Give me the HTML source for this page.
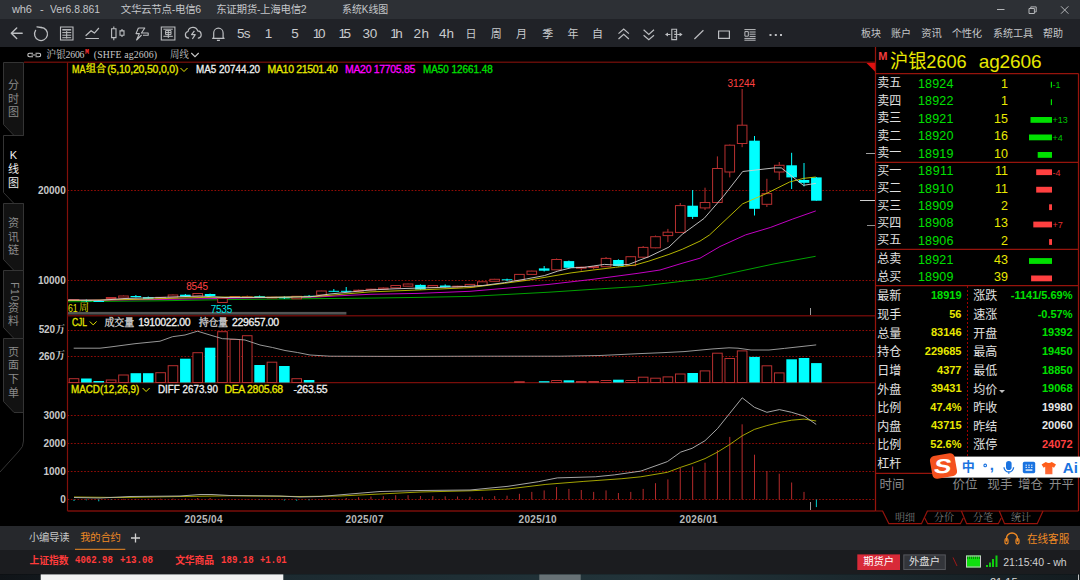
<!DOCTYPE html>
<html lang="zh-CN"><head><meta charset="utf-8"><title>wh6</title>
<style>
html,body{margin:0;padding:0;background:#000;}
body{width:1080px;height:580px;position:relative;overflow:hidden;font-family:'Liberation Sans','Noto Sans CJK SC',sans-serif;}
svg{position:absolute;left:0;top:0;}
.t{position:absolute;white-space:pre;display:block;}
</style></head><body>
<svg width="1080" height="580" viewBox="0 0 1080 580" shape-rendering="auto">
<rect x="0.00" y="0.00" width="1080.00" height="19.00" fill="#2d3035" />
<rect x="0.00" y="19.00" width="1080.00" height="28.00" fill="#202227" />
<line x1="997.00" y1="9.50" x2="1004.50" y2="9.50" stroke="#b4b6b9" stroke-width="1" />
<path d="M1029 8.5h5.4v5h-5.4z M1030.8 8.5v-1.6h5.4v5h-1.8" stroke="#b4b6b9" stroke-width="1" fill="none" />
<path d="M1061 6.3l7.4 7.4M1068.4 6.3l-7.4 7.4" stroke="#b4b6b9" stroke-width="1" fill="none" />
<path d="M22.2 33.2H11.3M16.7 28l-5.4 5.2 5.4 5.2" stroke="#bcbec1" stroke-width="1.4" fill="none" stroke-linecap="round" stroke-linejoin="round"/>
<path d="M41.2 27.5A6.5 6.5 0 1 1 35.6 30.4" stroke="#bcbec1" stroke-width="1.3" fill="none" stroke-linecap="round"/>
<path d="M37 26.9l4.2 0.6" stroke="#bcbec1" stroke-width="1.3" fill="none" stroke-linecap="round"/>
<path d="M60.5 27h12.5v13h-12.5z" stroke="#bcbec1" stroke-width="1.1" fill="none" />
<path d="M62.3 29.8h8.9" stroke="#bcbec1" stroke-width="1.5" fill="none" />
<path d="M62.3 32.6h8.9M62.3 35.2h8.9M62.3 37.7h8.9M66.7 31v7.5" stroke="#bcbec1" stroke-width="1" fill="none" />
<path d="M85.6 35.8l5.5-5.1 3.3 2.4 4.5-5.1M85.6 38.5h13.3" stroke="#bcbec1" stroke-width="1.2" fill="none" stroke-linejoin="round"/>
<path d="M113.8 26.4v13.8M122 29.1v7.8" stroke="#bcbec1" stroke-width="1.1" fill="none" />
<path d="M111.6 28.7h4.4v8.9h-4.4zM120 30.9h4v4.4h-4z" stroke="#bcbec1" stroke-width="1.1" fill="#202227" />
<path d="M138.4 28h6.4l-3.4 5h6.8v2.2h-5.2M138.4 28l-2.4 5.6h3.4l-2.8 6.4 5-5" stroke="#bcbec1" stroke-width="1.1" fill="none" stroke-linejoin="round"/>
<path d="M161.3 27h13.6v13h-13.6z" stroke="#bcbec1" stroke-width="1.1" fill="none" />
<path d="M163.4 29.2h9.4M165.6 30.6h5.4v4h-5.4zM165.6 32.6h5.4M168.3 30.6v7.4M163.4 36.3h9.4" stroke="#bcbec1" stroke-width="1" fill="none" />
<path d="M188.6 38.2a3.4 3.4 0 0 1-0.6-6.7 5 5 0 0 1 9.7-0.6 3.7 3.7 0 0 1 0.6 7.3" stroke="#bcbec1" stroke-width="1.2" fill="none" stroke-linecap="round"/>
<path d="M194.4 30.8l-2.8 3.8h3.6l-2.8 4.4" stroke="#bcbec1" stroke-width="1.2" fill="none" stroke-linejoin="round"/>
<path d="M213.7 37.3v-4.4a4.7 4.7 0 0 1 9.4 0v4.4l1 1.1h-11.4zM216.9 40.4h3" stroke="#bcbec1" stroke-width="1.2" fill="none" stroke-linejoin="round"/>
<path d="M618.5 33.6l5.2-4.6 5.2 4.6M618.5 39l5.2-4.6 5.2 4.6" stroke="#bcbec1" stroke-width="1.2" fill="none" />
<path d="M643.6 29.8l5.2 4.6 5.2-4.6M643.6 35.2l5.2 4.6 5.2-4.6" stroke="#bcbec1" stroke-width="1.2" fill="none" />
<path d="M671.8 29.2h4.8v10.4h-4.8zM674.2 31.8h2.4M674.2 34.4h2.4M674.2 37h2.4" stroke="#bcbec1" stroke-width="1.1" fill="none" />
<path d="M667 34.5h3.4M677.2 34.5h3" stroke="#bcbec1" stroke-width="1.1" fill="none" />
<path d="M665 34.5l3-1.9v3.8zM682.6 34.5l-3-1.9v3.8z" stroke="#bcbec1" stroke-width="0" fill="#bcbec1" />
<line x1="694.40" y1="39.00" x2="703.40" y2="30.20" stroke="#bcbec1" stroke-width="1.2" />
<path d="M718.6 31h10.8v7.3h-10.8z" stroke="#bcbec1" stroke-width="1.2" fill="none" />
<path d="M744.4 29.6h11.2M749.6 32h6M749.6 34.2h6M749.6 36.4h6M744.4 38.4h11.2M744.4 40.2h11.2" stroke="#bcbec1" stroke-width="1" fill="none" />
<path d="M744.9 31.6h3.4v4.6h-3.4z" stroke="#bcbec1" stroke-width="1" fill="none" />
<rect x="769.50" y="34.00" width="2.00" height="2.00" fill="#bcbec1" />
<rect x="774.80" y="34.00" width="2.00" height="2.00" fill="#bcbec1" />
<rect x="780.00" y="34.00" width="2.00" height="2.00" fill="#bcbec1" />
<path d="M33 53.3h-3.5a1.7 1.7 0 0 0 0 3.4h3.5M35.5 53.3h3.5a1.7 1.7 0 0 1 0 3.4h-3.5M31.5 55h5.5" stroke="#c8c8c8" stroke-width="1.1" fill="none" />
<path d="M191.3 53l3.7 3.7 3.7-3.7" stroke="#c8c8c8" stroke-width="1.1" fill="none" />
<path d="M3.5 62.5 H23.5 V135.5 H14 L3.5 124.5 Z" stroke="#343434" stroke-width="1" fill="#121212" />
<path d="M3.5 203.5 H23.5 V270.5 H14 L3.5 259.5 Z" stroke="#343434" stroke-width="1" fill="#121212" />
<path d="M3.5 270.5 H23.5 V338.5 H14 L3.5 327.5 Z" stroke="#343434" stroke-width="1" fill="#121212" />
<path d="M3.5 338.5 H23.5 V412.5 H14 L3.5 401.5 Z" stroke="#343434" stroke-width="1" fill="#121212" />
<path d="M23.5 135.5H3.5V192.5L14 203.5H23.5" stroke="#343434" stroke-width="1" fill="none" />
<path d="M23.5 412V441Q23.5 447 19 451L0 472" stroke="#343434" stroke-width="1" fill="none" />
<line x1="24.00" y1="62.20" x2="875.50" y2="62.20" stroke="#620c08" stroke-width="1.4" />
<line x1="67.50" y1="62.50" x2="67.50" y2="511.00" stroke="#82100a" stroke-width="1.2" />
<line x1="67.50" y1="315.70" x2="875.50" y2="315.70" stroke="#660a08" stroke-width="1.5" />
<line x1="67.50" y1="382.60" x2="875.50" y2="382.60" stroke="#780e0a" stroke-width="1.3" />
<line x1="67.50" y1="511.00" x2="875.50" y2="511.00" stroke="#780e0a" stroke-width="1.3" />
<path d="M866.5 63 H875.5 V72 Z" stroke="#e01010" stroke-width="0" fill="#e01010" />
<line x1="67.50" y1="190.50" x2="875.50" y2="190.50" stroke="#900c06" stroke-width="1" stroke-dasharray="1.67 1.67"/>
<line x1="67.50" y1="280.50" x2="875.50" y2="280.50" stroke="#900c06" stroke-width="1" stroke-dasharray="1.67 1.67"/>
<polyline points="68.0,301.8 160.0,300.8 227.0,299.6 270.0,299.1 370.0,298.1 418.0,297.4 470.0,296.4 504.0,294.6 549.0,292.2 593.0,289.3 638.0,286.5 682.0,281.3 706.0,278.7 738.0,271.6 774.0,263.9 815.6,256.3" stroke="#00b400" stroke-width="0.9" fill="none" stroke-linejoin="round" />
<polyline points="68.0,300.4 160.0,299.5 227.0,298.3 270.0,297.5 316.0,297.0 345.0,295.5 370.0,294.3 418.0,293.4 470.0,291.3 504.0,288.4 549.0,284.4 593.0,279.3 638.0,273.3 660.0,270.0 682.0,263.3 700.0,258.2 720.0,246.5 745.5,234.9 770.3,227.5 792.3,219.2 815.8,210.9" stroke="#d800d8" stroke-width="0.9" fill="none" stroke-linejoin="round" />
<line x1="74.00" y1="299.00" x2="74.00" y2="299.50" stroke="#b83030" stroke-width="1" />
<line x1="74.00" y1="300.50" x2="74.00" y2="301.00" stroke="#b83030" stroke-width="1" />
<rect x="69.20" y="299.50" width="9.60" height="1.00" fill="#000" stroke="#b83030" stroke-width="1"/>
<line x1="86.37" y1="299.50" x2="86.37" y2="302.00" stroke="#00ffff" stroke-width="1" />
<rect x="81.07" y="300.30" width="10.60" height="1.00" fill="#00ffff" />
<line x1="98.75" y1="300.50" x2="98.75" y2="302.00" stroke="#00ffff" stroke-width="1" />
<rect x="93.45" y="301.00" width="10.60" height="1.00" fill="#00ffff" />
<line x1="111.12" y1="297.00" x2="111.12" y2="297.50" stroke="#b83030" stroke-width="1" />
<line x1="111.12" y1="298.50" x2="111.12" y2="299.00" stroke="#b83030" stroke-width="1" />
<rect x="106.32" y="297.50" width="9.60" height="1.00" fill="#000" stroke="#b83030" stroke-width="1"/>
<line x1="123.49" y1="295.50" x2="123.49" y2="296.00" stroke="#b83030" stroke-width="1" />
<line x1="123.49" y1="298.00" x2="123.49" y2="298.50" stroke="#b83030" stroke-width="1" />
<rect x="118.69" y="296.00" width="9.60" height="2.00" fill="#000" stroke="#b83030" stroke-width="1"/>
<line x1="135.87" y1="295.00" x2="135.87" y2="297.50" stroke="#00ffff" stroke-width="1" />
<rect x="130.56" y="296.00" width="10.60" height="1.20" fill="#00ffff" />
<line x1="148.24" y1="296.50" x2="148.24" y2="299.00" stroke="#00ffff" stroke-width="1" />
<rect x="142.94" y="297.20" width="10.60" height="1.60" fill="#00ffff" />
<line x1="160.61" y1="297.00" x2="160.61" y2="297.30" stroke="#b83030" stroke-width="1" />
<line x1="160.61" y1="298.00" x2="160.61" y2="298.50" stroke="#b83030" stroke-width="1" />
<rect x="155.81" y="297.30" width="9.60" height="0.80" fill="#000" stroke="#b83030" stroke-width="1"/>
<line x1="172.98" y1="294.50" x2="172.98" y2="295.00" stroke="#b83030" stroke-width="1" />
<line x1="172.98" y1="297.20" x2="172.98" y2="297.50" stroke="#b83030" stroke-width="1" />
<rect x="168.18" y="295.00" width="9.60" height="2.20" fill="#000" stroke="#b83030" stroke-width="1"/>
<line x1="185.36" y1="294.00" x2="185.36" y2="297.00" stroke="#00ffff" stroke-width="1" />
<rect x="180.06" y="294.70" width="10.60" height="2.00" fill="#00ffff" />
<line x1="197.73" y1="293.40" x2="197.73" y2="293.50" stroke="#b83030" stroke-width="1" />
<line x1="197.73" y1="296.20" x2="197.73" y2="296.50" stroke="#b83030" stroke-width="1" />
<rect x="192.93" y="293.50" width="9.60" height="2.70" fill="#000" stroke="#b83030" stroke-width="1"/>
<line x1="210.10" y1="293.60" x2="210.10" y2="296.30" stroke="#00ffff" stroke-width="1" />
<rect x="204.80" y="294.00" width="10.60" height="2.00" fill="#00ffff" />
<line x1="222.48" y1="297.50" x2="222.48" y2="298.30" stroke="#b83030" stroke-width="1" />
<line x1="222.48" y1="302.50" x2="222.48" y2="302.70" stroke="#b83030" stroke-width="1" />
<rect x="217.68" y="298.30" width="9.60" height="4.20" fill="#000" stroke="#b83030" stroke-width="1"/>
<line x1="234.85" y1="296.00" x2="234.85" y2="296.50" stroke="#b83030" stroke-width="1" />
<line x1="234.85" y1="297.00" x2="234.85" y2="297.50" stroke="#b83030" stroke-width="1" />
<rect x="230.05" y="296.50" width="9.60" height="0.80" fill="#000" stroke="#b83030" stroke-width="1"/>
<line x1="247.22" y1="295.50" x2="247.22" y2="296.80" stroke="#b83030" stroke-width="1" />
<line x1="247.22" y1="297.40" x2="247.22" y2="298.00" stroke="#b83030" stroke-width="1" />
<rect x="242.42" y="296.80" width="9.60" height="0.80" fill="#000" stroke="#b83030" stroke-width="1"/>
<line x1="259.60" y1="295.50" x2="259.60" y2="297.20" stroke="#00ffff" stroke-width="1" />
<rect x="254.30" y="296.20" width="10.60" height="1.00" fill="#00ffff" />
<line x1="271.97" y1="296.80" x2="271.97" y2="297.20" stroke="#b83030" stroke-width="1" />
<line x1="271.97" y1="298.00" x2="271.97" y2="298.20" stroke="#b83030" stroke-width="1" />
<rect x="267.17" y="297.20" width="9.60" height="0.80" fill="#000" stroke="#b83030" stroke-width="1"/>
<line x1="284.34" y1="296.30" x2="284.34" y2="299.00" stroke="#00ffff" stroke-width="1" />
<rect x="279.04" y="297.30" width="10.60" height="1.00" fill="#00ffff" />
<line x1="296.71" y1="296.00" x2="296.71" y2="296.30" stroke="#b83030" stroke-width="1" />
<line x1="296.71" y1="298.80" x2="296.71" y2="299.00" stroke="#b83030" stroke-width="1" />
<rect x="291.91" y="296.30" width="9.60" height="2.50" fill="#000" stroke="#b83030" stroke-width="1"/>
<line x1="309.09" y1="295.00" x2="309.09" y2="296.80" stroke="#00ffff" stroke-width="1" />
<rect x="303.79" y="295.80" width="10.60" height="1.00" fill="#00ffff" />
<line x1="321.46" y1="290.80" x2="321.46" y2="291.00" stroke="#b83030" stroke-width="1" />
<line x1="321.46" y1="295.00" x2="321.46" y2="295.30" stroke="#b83030" stroke-width="1" />
<rect x="316.66" y="291.00" width="9.60" height="4.00" fill="#000" stroke="#b83030" stroke-width="1"/>
<line x1="333.83" y1="289.00" x2="333.83" y2="292.00" stroke="#00ffff" stroke-width="1" />
<rect x="328.53" y="290.80" width="10.60" height="1.00" fill="#00ffff" />
<line x1="346.21" y1="287.00" x2="346.21" y2="292.00" stroke="#00ffff" stroke-width="1" />
<rect x="340.91" y="290.80" width="10.60" height="1.00" fill="#00ffff" />
<line x1="358.58" y1="289.60" x2="358.58" y2="290.20" stroke="#b83030" stroke-width="1" />
<line x1="358.58" y1="291.00" x2="358.58" y2="291.30" stroke="#b83030" stroke-width="1" />
<rect x="353.78" y="290.20" width="9.60" height="0.80" fill="#000" stroke="#b83030" stroke-width="1"/>
<line x1="370.95" y1="288.80" x2="370.95" y2="289.20" stroke="#b83030" stroke-width="1" />
<line x1="370.95" y1="290.00" x2="370.95" y2="290.50" stroke="#b83030" stroke-width="1" />
<rect x="366.15" y="289.20" width="9.60" height="0.80" fill="#000" stroke="#b83030" stroke-width="1"/>
<line x1="383.32" y1="287.50" x2="383.32" y2="288.00" stroke="#b83030" stroke-width="1" />
<line x1="383.32" y1="289.20" x2="383.32" y2="289.50" stroke="#b83030" stroke-width="1" />
<rect x="378.52" y="288.00" width="9.60" height="1.20" fill="#000" stroke="#b83030" stroke-width="1"/>
<line x1="395.70" y1="285.20" x2="395.70" y2="285.50" stroke="#b83030" stroke-width="1" />
<line x1="395.70" y1="287.80" x2="395.70" y2="288.00" stroke="#b83030" stroke-width="1" />
<rect x="390.90" y="285.50" width="9.60" height="2.30" fill="#000" stroke="#b83030" stroke-width="1"/>
<line x1="408.07" y1="283.60" x2="408.07" y2="284.00" stroke="#b83030" stroke-width="1" />
<line x1="408.07" y1="286.20" x2="408.07" y2="286.60" stroke="#b83030" stroke-width="1" />
<rect x="403.27" y="284.00" width="9.60" height="2.20" fill="#000" stroke="#b83030" stroke-width="1"/>
<line x1="420.44" y1="284.40" x2="420.44" y2="289.80" stroke="#00ffff" stroke-width="1" />
<rect x="415.14" y="284.90" width="10.60" height="4.60" fill="#00ffff" />
<line x1="432.82" y1="285.00" x2="432.82" y2="285.50" stroke="#b83030" stroke-width="1" />
<line x1="432.82" y1="287.30" x2="432.82" y2="287.60" stroke="#b83030" stroke-width="1" />
<rect x="428.02" y="285.50" width="9.60" height="1.80" fill="#000" stroke="#b83030" stroke-width="1"/>
<line x1="445.19" y1="284.40" x2="445.19" y2="287.40" stroke="#00ffff" stroke-width="1" />
<rect x="439.89" y="285.50" width="10.60" height="1.50" fill="#00ffff" />
<line x1="457.56" y1="285.80" x2="457.56" y2="286.20" stroke="#b83030" stroke-width="1" />
<line x1="457.56" y1="287.00" x2="457.56" y2="287.40" stroke="#b83030" stroke-width="1" />
<rect x="452.76" y="286.20" width="9.60" height="0.80" fill="#000" stroke="#b83030" stroke-width="1"/>
<line x1="469.94" y1="284.00" x2="469.94" y2="284.40" stroke="#b83030" stroke-width="1" />
<line x1="469.94" y1="286.70" x2="469.94" y2="287.00" stroke="#b83030" stroke-width="1" />
<rect x="465.14" y="284.40" width="9.60" height="2.30" fill="#000" stroke="#b83030" stroke-width="1"/>
<line x1="482.31" y1="281.40" x2="482.31" y2="281.80" stroke="#b83030" stroke-width="1" />
<line x1="482.31" y1="285.50" x2="482.31" y2="285.80" stroke="#b83030" stroke-width="1" />
<rect x="477.51" y="281.80" width="9.60" height="3.70" fill="#000" stroke="#b83030" stroke-width="1"/>
<line x1="494.68" y1="278.80" x2="494.68" y2="279.30" stroke="#b83030" stroke-width="1" />
<line x1="494.68" y1="281.30" x2="494.68" y2="281.60" stroke="#b83030" stroke-width="1" />
<rect x="489.88" y="279.30" width="9.60" height="2.00" fill="#000" stroke="#b83030" stroke-width="1"/>
<line x1="507.05" y1="278.60" x2="507.05" y2="281.00" stroke="#00ffff" stroke-width="1" />
<rect x="501.75" y="279.30" width="10.60" height="1.00" fill="#00ffff" />
<line x1="519.43" y1="274.00" x2="519.43" y2="274.40" stroke="#b83030" stroke-width="1" />
<line x1="519.43" y1="280.40" x2="519.43" y2="280.80" stroke="#b83030" stroke-width="1" />
<rect x="514.63" y="274.40" width="9.60" height="6.00" fill="#000" stroke="#b83030" stroke-width="1"/>
<line x1="531.80" y1="270.70" x2="531.80" y2="271.10" stroke="#b83030" stroke-width="1" />
<line x1="531.80" y1="274.40" x2="531.80" y2="274.80" stroke="#b83030" stroke-width="1" />
<rect x="527.00" y="271.10" width="9.60" height="3.30" fill="#000" stroke="#b83030" stroke-width="1"/>
<line x1="544.17" y1="266.00" x2="544.17" y2="271.50" stroke="#00ffff" stroke-width="1" />
<rect x="538.87" y="268.40" width="10.60" height="2.30" fill="#00ffff" />
<line x1="556.55" y1="258.50" x2="556.55" y2="259.50" stroke="#b83030" stroke-width="1" />
<line x1="556.55" y1="269.80" x2="556.55" y2="270.20" stroke="#b83030" stroke-width="1" />
<rect x="551.75" y="259.50" width="9.60" height="10.30" fill="#000" stroke="#b83030" stroke-width="1"/>
<line x1="568.92" y1="260.50" x2="568.92" y2="268.20" stroke="#00ffff" stroke-width="1" />
<rect x="563.62" y="261.10" width="10.60" height="6.70" fill="#00ffff" />
<line x1="581.29" y1="266.80" x2="581.29" y2="267.20" stroke="#b83030" stroke-width="1" />
<line x1="581.29" y1="268.20" x2="581.29" y2="270.60" stroke="#b83030" stroke-width="1" />
<rect x="576.49" y="267.20" width="9.60" height="1.00" fill="#000" stroke="#b83030" stroke-width="1"/>
<line x1="593.67" y1="266.00" x2="593.67" y2="266.60" stroke="#b83030" stroke-width="1" />
<line x1="593.67" y1="267.60" x2="593.67" y2="269.30" stroke="#b83030" stroke-width="1" />
<rect x="588.87" y="266.60" width="9.60" height="1.00" fill="#000" stroke="#b83030" stroke-width="1"/>
<line x1="606.04" y1="257.00" x2="606.04" y2="258.40" stroke="#b83030" stroke-width="1" />
<line x1="606.04" y1="266.70" x2="606.04" y2="267.00" stroke="#b83030" stroke-width="1" />
<rect x="601.24" y="258.40" width="9.60" height="8.30" fill="#000" stroke="#b83030" stroke-width="1"/>
<line x1="618.41" y1="259.30" x2="618.41" y2="266.40" stroke="#00ffff" stroke-width="1" />
<rect x="613.11" y="260.00" width="10.60" height="6.00" fill="#00ffff" />
<line x1="630.78" y1="256.00" x2="630.78" y2="256.70" stroke="#b83030" stroke-width="1" />
<line x1="630.78" y1="265.60" x2="630.78" y2="266.00" stroke="#b83030" stroke-width="1" />
<rect x="625.99" y="256.70" width="9.60" height="8.90" fill="#000" stroke="#b83030" stroke-width="1"/>
<line x1="643.16" y1="246.00" x2="643.16" y2="247.40" stroke="#b83030" stroke-width="1" />
<line x1="643.16" y1="257.20" x2="643.16" y2="258.00" stroke="#b83030" stroke-width="1" />
<rect x="638.36" y="247.40" width="9.60" height="9.80" fill="#000" stroke="#b83030" stroke-width="1"/>
<line x1="655.53" y1="235.50" x2="655.53" y2="236.70" stroke="#b83030" stroke-width="1" />
<line x1="655.53" y1="247.80" x2="655.53" y2="248.30" stroke="#b83030" stroke-width="1" />
<rect x="650.73" y="236.70" width="9.60" height="11.10" fill="#000" stroke="#b83030" stroke-width="1"/>
<line x1="667.90" y1="228.90" x2="667.90" y2="232.20" stroke="#b83030" stroke-width="1" />
<line x1="667.90" y1="235.60" x2="667.90" y2="242.20" stroke="#b83030" stroke-width="1" />
<rect x="663.10" y="232.20" width="9.60" height="3.40" fill="#000" stroke="#b83030" stroke-width="1"/>
<line x1="680.28" y1="203.00" x2="680.28" y2="205.60" stroke="#b83030" stroke-width="1" />
<line x1="680.28" y1="232.40" x2="680.28" y2="233.00" stroke="#b83030" stroke-width="1" />
<rect x="675.48" y="205.60" width="9.60" height="26.80" fill="#000" stroke="#b83030" stroke-width="1"/>
<line x1="692.65" y1="190.00" x2="692.65" y2="219.00" stroke="#00ffff" stroke-width="1" />
<rect x="687.35" y="205.70" width="10.60" height="11.20" fill="#00ffff" />
<line x1="705.02" y1="187.70" x2="705.02" y2="202.50" stroke="#b83030" stroke-width="1" />
<line x1="705.02" y1="207.90" x2="705.02" y2="210.00" stroke="#b83030" stroke-width="1" />
<rect x="700.22" y="202.50" width="9.60" height="5.40" fill="#000" stroke="#b83030" stroke-width="1"/>
<line x1="717.40" y1="156.40" x2="717.40" y2="168.50" stroke="#b83030" stroke-width="1" />
<line x1="717.40" y1="202.50" x2="717.40" y2="203.00" stroke="#b83030" stroke-width="1" />
<rect x="712.60" y="168.50" width="9.60" height="34.00" fill="#000" stroke="#b83030" stroke-width="1"/>
<line x1="729.77" y1="144.50" x2="729.77" y2="145.20" stroke="#b83030" stroke-width="1" />
<line x1="729.77" y1="172.00" x2="729.77" y2="177.40" stroke="#b83030" stroke-width="1" />
<rect x="724.97" y="145.20" width="9.60" height="26.80" fill="#000" stroke="#b83030" stroke-width="1"/>
<line x1="742.14" y1="89.00" x2="742.14" y2="125.20" stroke="#b83030" stroke-width="1" />
<line x1="742.14" y1="143.50" x2="742.14" y2="147.20" stroke="#b83030" stroke-width="1" />
<rect x="737.34" y="125.20" width="9.60" height="18.30" fill="#000" stroke="#b83030" stroke-width="1"/>
<line x1="754.51" y1="136.00" x2="754.51" y2="215.50" stroke="#00ffff" stroke-width="1" />
<rect x="749.22" y="140.70" width="10.60" height="68.10" fill="#00ffff" />
<line x1="766.89" y1="178.80" x2="766.89" y2="193.60" stroke="#b83030" stroke-width="1" />
<line x1="766.89" y1="204.30" x2="766.89" y2="207.00" stroke="#b83030" stroke-width="1" />
<rect x="762.09" y="193.60" width="9.60" height="10.70" fill="#000" stroke="#b83030" stroke-width="1"/>
<line x1="779.26" y1="162.00" x2="779.26" y2="165.30" stroke="#b83030" stroke-width="1" />
<line x1="779.26" y1="172.00" x2="779.26" y2="180.00" stroke="#b83030" stroke-width="1" />
<rect x="774.46" y="165.30" width="9.60" height="6.70" fill="#000" stroke="#b83030" stroke-width="1"/>
<line x1="791.63" y1="152.80" x2="791.63" y2="189.00" stroke="#00ffff" stroke-width="1" />
<rect x="786.33" y="165.30" width="10.60" height="12.10" fill="#00ffff" />
<line x1="804.01" y1="163.00" x2="804.01" y2="186.40" stroke="#00ffff" stroke-width="1" />
<rect x="798.71" y="180.00" width="10.60" height="2.80" fill="#00ffff" />
<line x1="816.38" y1="177.00" x2="816.38" y2="200.70" stroke="#00ffff" stroke-width="1" />
<rect x="811.08" y="177.40" width="10.60" height="23.30" fill="#00ffff" />
<polyline points="68.0,300.6 130.0,299.5 160.0,298.7 200.0,297.5 227.0,297.0 270.0,297.3 316.0,296.5 345.0,294.0 370.0,291.9 418.0,290.0 470.0,287.6 504.4,283.3 526.7,280.4 548.9,276.7 571.1,272.9 593.3,270.0 615.6,267.3 635.6,264.9 648.9,261.1 668.9,254.4 682.2,249.3 700.0,241.1 709.6,234.9 742.7,203.8 766.2,193.6 789.6,182.0 803.4,178.4 815.8,177.0" stroke="#c8c800" stroke-width="0.9" fill="none" stroke-linejoin="round" />
<polyline points="68.0,300.0 100.0,300.3 125.0,298.5 160.0,297.5 200.0,296.0 225.0,297.5 270.0,297.4 310.0,296.8 330.0,294.0 350.0,292.0 370.0,290.0 395.0,288.8 418.0,288.1 445.0,287.3 460.0,286.7 482.2,285.6 504.4,282.7 526.7,278.9 544.4,275.6 557.8,271.1 571.1,267.8 584.4,267.3 593.3,266.0 604.4,264.4 615.6,265.1 628.9,264.4 640.0,260.0 648.9,256.7 668.9,247.1 682.2,234.4 704.1,218.4 723.4,196.3 742.7,171.5 774.4,167.9 781.3,167.9 803.4,185.3 815.8,183.4" stroke="#d0d0d0" stroke-width="0.9" fill="none" stroke-linejoin="round" />
<rect x="68.00" y="311.90" width="278.40" height="2.70" fill="#525454" />
<line x1="810.50" y1="308.00" x2="810.50" y2="315.00" stroke="#9a9a9a" stroke-width="1" />
<path d="M180.5 68l3.5 3.5 3.5-3.5" stroke="#e8e800" stroke-width="1" fill="none" />
<line x1="67.50" y1="330.50" x2="875.50" y2="330.50" stroke="#900c06" stroke-width="1" stroke-dasharray="1.67 1.67"/>
<line x1="67.50" y1="356.50" x2="875.50" y2="356.50" stroke="#900c06" stroke-width="1" stroke-dasharray="1.67 1.67"/>
<path d="M89.8 321.5l3.4 3.4 3.4-3.4" stroke="#e8e800" stroke-width="1" fill="none" />
<rect x="69.20" y="378.70" width="9.60" height="3.80" fill="#000" stroke="#b83030" stroke-width="1"/>
<rect x="81.07" y="378.50" width="10.60" height="4.00" fill="#00ffff" />
<rect x="93.45" y="381.00" width="10.60" height="1.50" fill="#00ffff" />
<rect x="106.32" y="380.00" width="9.60" height="2.50" fill="#000" stroke="#b83030" stroke-width="1"/>
<rect x="118.69" y="375.00" width="9.60" height="7.50" fill="#000" stroke="#b83030" stroke-width="1"/>
<rect x="130.56" y="373.20" width="10.60" height="9.30" fill="#00ffff" />
<rect x="142.94" y="373.20" width="10.60" height="9.30" fill="#00ffff" />
<rect x="155.81" y="372.70" width="9.60" height="9.80" fill="#000" stroke="#b83030" stroke-width="1"/>
<rect x="168.18" y="365.70" width="9.60" height="16.80" fill="#000" stroke="#b83030" stroke-width="1"/>
<rect x="180.06" y="358.70" width="10.60" height="23.80" fill="#00ffff" />
<rect x="192.93" y="352.70" width="9.60" height="29.80" fill="#000" stroke="#b83030" stroke-width="1"/>
<rect x="204.80" y="347.70" width="10.60" height="34.80" fill="#00ffff" />
<rect x="217.68" y="331.70" width="9.60" height="50.80" fill="#000" stroke="#b83030" stroke-width="1"/>
<rect x="230.05" y="339.50" width="9.60" height="43.00" fill="#000" stroke="#b83030" stroke-width="1"/>
<rect x="242.42" y="335.70" width="9.60" height="46.80" fill="#000" stroke="#b83030" stroke-width="1"/>
<rect x="254.30" y="365.00" width="10.60" height="17.50" fill="#00ffff" />
<rect x="267.17" y="362.20" width="9.60" height="20.30" fill="#000" stroke="#b83030" stroke-width="1"/>
<rect x="279.04" y="366.00" width="10.60" height="16.50" fill="#00ffff" />
<rect x="291.91" y="378.70" width="9.60" height="3.80" fill="#000" stroke="#b83030" stroke-width="1"/>
<rect x="303.79" y="380.00" width="10.60" height="2.50" fill="#00ffff" />
<rect x="514.63" y="381.70" width="9.60" height="0.80" fill="#000" stroke="#b83030" stroke-width="1"/>
<rect x="538.87" y="381.20" width="10.60" height="1.30" fill="#00ffff" />
<rect x="551.75" y="380.50" width="9.60" height="2.00" fill="#000" stroke="#b83030" stroke-width="1"/>
<rect x="563.62" y="380.30" width="10.60" height="2.20" fill="#00ffff" />
<rect x="576.49" y="381.50" width="9.60" height="1.00" fill="#000" stroke="#b83030" stroke-width="1"/>
<rect x="588.87" y="381.50" width="9.60" height="1.00" fill="#000" stroke="#b83030" stroke-width="1"/>
<rect x="601.24" y="380.50" width="9.60" height="2.00" fill="#000" stroke="#b83030" stroke-width="1"/>
<rect x="613.11" y="379.70" width="10.60" height="2.80" fill="#00ffff" />
<rect x="625.99" y="380.50" width="9.60" height="2.00" fill="#000" stroke="#b83030" stroke-width="1"/>
<rect x="638.36" y="377.20" width="9.60" height="5.30" fill="#000" stroke="#b83030" stroke-width="1"/>
<rect x="650.73" y="378.20" width="9.60" height="4.30" fill="#000" stroke="#b83030" stroke-width="1"/>
<rect x="663.10" y="376.90" width="9.60" height="5.60" fill="#000" stroke="#b83030" stroke-width="1"/>
<rect x="675.48" y="374.00" width="9.60" height="8.50" fill="#000" stroke="#b83030" stroke-width="1"/>
<rect x="687.35" y="373.00" width="10.60" height="9.50" fill="#00ffff" />
<rect x="700.22" y="370.90" width="9.60" height="11.60" fill="#000" stroke="#b83030" stroke-width="1"/>
<rect x="712.60" y="353.20" width="9.60" height="29.30" fill="#000" stroke="#b83030" stroke-width="1"/>
<rect x="724.97" y="358.50" width="9.60" height="24.00" fill="#000" stroke="#b83030" stroke-width="1"/>
<rect x="737.34" y="350.90" width="9.60" height="31.60" fill="#000" stroke="#b83030" stroke-width="1"/>
<rect x="749.22" y="356.90" width="10.60" height="25.60" fill="#00ffff" />
<rect x="762.09" y="365.80" width="9.60" height="16.70" fill="#000" stroke="#b83030" stroke-width="1"/>
<rect x="774.46" y="372.90" width="9.60" height="9.60" fill="#000" stroke="#b83030" stroke-width="1"/>
<rect x="786.33" y="359.30" width="10.60" height="23.20" fill="#00ffff" />
<rect x="798.71" y="358.00" width="10.60" height="24.50" fill="#00ffff" />
<rect x="811.08" y="363.10" width="10.60" height="19.40" fill="#00ffff" />
<polyline points="73.7,348.2 100.0,348.2 110.0,347.0 135.0,343.7 160.0,341.2 172.5,336.7 185.0,335.0 197.5,331.2 210.0,335.0 222.5,338.7 235.0,339.2 245.0,340.0 260.0,345.0 272.5,347.5 285.0,350.5 297.5,352.5 310.0,355.0 330.0,356.2 400.0,356.4 480.0,356.2 560.0,356.2 600.0,355.5 640.0,353.6 662.0,352.7 684.0,351.6 713.0,348.9 729.0,347.8 738.0,348.2 751.0,350.0 769.0,350.0 784.4,348.4 800.0,346.7 816.2,344.9" stroke="#a8a8a8" stroke-width="0.9" fill="none" stroke-linejoin="round" />
<line x1="67.50" y1="415.50" x2="875.50" y2="415.50" stroke="#900c06" stroke-width="1" stroke-dasharray="1.67 1.67"/>
<line x1="67.50" y1="443.50" x2="875.50" y2="443.50" stroke="#900c06" stroke-width="1" stroke-dasharray="1.67 1.67"/>
<line x1="67.50" y1="471.50" x2="875.50" y2="471.50" stroke="#900c06" stroke-width="1" stroke-dasharray="1.67 1.67"/>
<line x1="67.50" y1="499.50" x2="875.50" y2="499.50" stroke="#900c06" stroke-width="1" stroke-dasharray="1.67 1.67"/>
<path d="M142.6 388l3.5 3.5 3.5-3.5" stroke="#e8e800" stroke-width="1" fill="none" />
<line x1="74.00" y1="499.50" x2="74.00" y2="501.00" stroke="#00d0d0" stroke-width="1" />
<line x1="86.37" y1="499.50" x2="86.37" y2="500.30" stroke="#00d0d0" stroke-width="1" />
<line x1="98.75" y1="499.50" x2="98.75" y2="501.30" stroke="#00d0d0" stroke-width="1" />
<line x1="111.12" y1="499.50" x2="111.12" y2="500.00" stroke="#00d0d0" stroke-width="1" />
<line x1="123.49" y1="498.90" x2="123.49" y2="499.50" stroke="#c83030" stroke-width="0.9" />
<line x1="135.87" y1="498.90" x2="135.87" y2="499.50" stroke="#c83030" stroke-width="0.9" />
<line x1="148.24" y1="498.80" x2="148.24" y2="499.50" stroke="#c83030" stroke-width="0.9" />
<line x1="160.61" y1="498.70" x2="160.61" y2="499.50" stroke="#c83030" stroke-width="0.9" />
<line x1="172.98" y1="498.60" x2="172.98" y2="499.50" stroke="#c83030" stroke-width="0.9" />
<line x1="185.36" y1="498.50" x2="185.36" y2="499.50" stroke="#c83030" stroke-width="0.9" />
<line x1="197.73" y1="498.00" x2="197.73" y2="499.50" stroke="#c83030" stroke-width="0.9" />
<line x1="210.10" y1="498.00" x2="210.10" y2="499.50" stroke="#c83030" stroke-width="0.9" />
<line x1="222.48" y1="499.00" x2="222.48" y2="499.50" stroke="#c83030" stroke-width="0.9" />
<line x1="234.85" y1="499.00" x2="234.85" y2="499.50" stroke="#c83030" stroke-width="0.9" />
<line x1="247.22" y1="499.10" x2="247.22" y2="499.50" stroke="#c83030" stroke-width="0.9" />
<line x1="259.60" y1="499.50" x2="259.60" y2="499.90" stroke="#00d0d0" stroke-width="1" />
<line x1="271.97" y1="499.10" x2="271.97" y2="499.50" stroke="#c83030" stroke-width="0.9" />
<line x1="284.34" y1="499.50" x2="284.34" y2="500.50" stroke="#00d0d0" stroke-width="1" />
<line x1="296.71" y1="499.50" x2="296.71" y2="500.70" stroke="#00d0d0" stroke-width="1" />
<line x1="309.09" y1="499.50" x2="309.09" y2="500.30" stroke="#00d0d0" stroke-width="1" />
<line x1="321.46" y1="499.20" x2="321.46" y2="499.50" stroke="#c83030" stroke-width="0.9" />
<line x1="333.83" y1="498.70" x2="333.83" y2="499.50" stroke="#c83030" stroke-width="0.9" />
<line x1="346.21" y1="498.00" x2="346.21" y2="499.50" stroke="#c83030" stroke-width="0.9" />
<line x1="358.58" y1="497.20" x2="358.58" y2="499.50" stroke="#c83030" stroke-width="0.9" />
<line x1="370.95" y1="496.50" x2="370.95" y2="499.50" stroke="#c83030" stroke-width="0.9" />
<line x1="383.32" y1="496.20" x2="383.32" y2="499.50" stroke="#c83030" stroke-width="0.9" />
<line x1="395.70" y1="495.20" x2="395.70" y2="499.50" stroke="#c83030" stroke-width="0.9" />
<line x1="408.07" y1="495.20" x2="408.07" y2="499.50" stroke="#c83030" stroke-width="0.9" />
<line x1="420.44" y1="496.00" x2="420.44" y2="499.50" stroke="#c83030" stroke-width="0.9" />
<line x1="432.82" y1="496.10" x2="432.82" y2="499.50" stroke="#c83030" stroke-width="0.9" />
<line x1="445.19" y1="496.30" x2="445.19" y2="499.50" stroke="#c83030" stroke-width="0.9" />
<line x1="457.56" y1="496.50" x2="457.56" y2="499.50" stroke="#c83030" stroke-width="0.9" />
<line x1="469.94" y1="496.80" x2="469.94" y2="499.50" stroke="#c83030" stroke-width="0.9" />
<line x1="482.31" y1="496.80" x2="482.31" y2="499.50" stroke="#c83030" stroke-width="0.9" />
<line x1="494.68" y1="496.10" x2="494.68" y2="499.50" stroke="#c83030" stroke-width="0.9" />
<line x1="507.05" y1="495.70" x2="507.05" y2="499.50" stroke="#c83030" stroke-width="0.9" />
<line x1="519.43" y1="493.80" x2="519.43" y2="499.50" stroke="#c83030" stroke-width="0.9" />
<line x1="531.80" y1="491.90" x2="531.80" y2="499.50" stroke="#c83030" stroke-width="0.9" />
<line x1="544.17" y1="490.40" x2="544.17" y2="499.50" stroke="#c83030" stroke-width="0.9" />
<line x1="556.55" y1="487.00" x2="556.55" y2="499.50" stroke="#c83030" stroke-width="0.9" />
<line x1="568.92" y1="488.90" x2="568.92" y2="499.50" stroke="#c83030" stroke-width="0.9" />
<line x1="581.29" y1="490.00" x2="581.29" y2="499.50" stroke="#c83030" stroke-width="0.9" />
<line x1="593.67" y1="491.90" x2="593.67" y2="499.50" stroke="#c83030" stroke-width="0.9" />
<line x1="606.04" y1="490.40" x2="606.04" y2="499.50" stroke="#c83030" stroke-width="0.9" />
<line x1="618.41" y1="493.00" x2="618.41" y2="499.50" stroke="#c83030" stroke-width="0.9" />
<line x1="630.78" y1="491.90" x2="630.78" y2="499.50" stroke="#c83030" stroke-width="0.9" />
<line x1="643.16" y1="488.90" x2="643.16" y2="499.50" stroke="#c83030" stroke-width="0.9" />
<line x1="655.53" y1="483.20" x2="655.53" y2="499.50" stroke="#c83030" stroke-width="0.9" />
<line x1="667.90" y1="479.40" x2="667.90" y2="499.50" stroke="#c83030" stroke-width="0.9" />
<line x1="680.28" y1="468.00" x2="680.28" y2="499.50" stroke="#c83030" stroke-width="0.9" />
<line x1="692.65" y1="466.50" x2="692.65" y2="499.50" stroke="#c83030" stroke-width="0.9" />
<line x1="705.02" y1="462.70" x2="705.02" y2="499.50" stroke="#c83030" stroke-width="0.9" />
<line x1="717.40" y1="450.10" x2="717.40" y2="499.50" stroke="#c83030" stroke-width="0.9" />
<line x1="729.77" y1="436.90" x2="729.77" y2="499.50" stroke="#c83030" stroke-width="0.9" />
<line x1="742.14" y1="424.30" x2="742.14" y2="499.50" stroke="#c83030" stroke-width="0.9" />
<line x1="754.51" y1="454.70" x2="754.51" y2="499.50" stroke="#c83030" stroke-width="0.9" />
<line x1="766.89" y1="471.00" x2="766.89" y2="499.50" stroke="#c83030" stroke-width="0.9" />
<line x1="779.26" y1="473.70" x2="779.26" y2="499.50" stroke="#c83030" stroke-width="0.9" />
<line x1="791.63" y1="482.50" x2="791.63" y2="499.50" stroke="#c83030" stroke-width="0.9" />
<line x1="804.01" y1="491.90" x2="804.01" y2="499.50" stroke="#c83030" stroke-width="0.9" />
<line x1="816.38" y1="499.50" x2="816.38" y2="507.10" stroke="#00d0d0" stroke-width="1" />
<line x1="810.50" y1="502.00" x2="810.50" y2="510.00" stroke="#9a9a9a" stroke-width="1" />
<polyline points="74.0,497.0 120.0,497.5 180.0,496.5 230.0,495.8 300.0,496.5 340.0,496.0 380.0,494.0 420.0,492.0 470.0,490.8 508.0,489.0 545.9,484.4 583.9,481.4 621.9,478.7 640.8,476.8 667.4,472.3 680.7,467.3 692.1,463.5 705.0,458.6 717.5,452.1 729.7,444.5 742.2,435.8 754.4,429.4 766.9,425.6 779.4,422.5 791.6,420.2 804.1,419.1 816.2,421.0" stroke="#b4b400" stroke-width="0.9" fill="none" stroke-linejoin="round" />
<polyline points="74.0,497.5 100.0,498.0 130.0,496.5 180.0,496.0 200.0,494.5 212.0,494.5 230.0,495.5 280.0,496.0 300.0,497.0 320.0,496.5 350.0,494.0 380.0,491.5 420.0,490.5 470.0,490.0 508.0,486.3 538.3,481.7 557.3,477.9 595.3,476.8 614.3,474.9 640.8,471.1 667.4,461.6 680.7,452.1 692.1,448.3 705.0,440.7 717.5,428.6 729.7,413.4 742.2,397.8 754.4,407.3 766.9,412.3 779.4,409.6 791.6,412.3 804.1,416.1 816.2,424.4" stroke="#b8b8b8" stroke-width="0.9" fill="none" stroke-linejoin="round" />
<line x1="875.50" y1="47.00" x2="875.50" y2="511.00" stroke="#96140c" stroke-width="1.25" />
<line x1="1078.50" y1="73.50" x2="1078.50" y2="511.00" stroke="#96140c" stroke-width="1.25" />
<line x1="875.50" y1="73.50" x2="1078.50" y2="73.50" stroke="#96140c" stroke-width="1.25" />
<line x1="875.50" y1="162.30" x2="1078.50" y2="162.30" stroke="#96140c" stroke-width="1.25" />
<line x1="875.50" y1="249.40" x2="1078.50" y2="249.40" stroke="#96140c" stroke-width="1.25" />
<line x1="875.50" y1="285.60" x2="1078.50" y2="285.60" stroke="#96140c" stroke-width="1.25" />
<line x1="875.50" y1="473.40" x2="1078.50" y2="473.40" stroke="#96140c" stroke-width="1.25" />
<line x1="967.50" y1="286.00" x2="967.50" y2="473.00" stroke="#a00000" stroke-width="1" stroke-dasharray="2 2"/>
<rect x="1050.80" y="81.80" width="1.20" height="5.80" fill="#00e000" />
<rect x="1050.80" y="99.30" width="1.20" height="5.80" fill="#00e000" />
<rect x="1030.50" y="117.00" width="21.50" height="5.80" fill="#00e000" />
<rect x="1029.00" y="134.50" width="23.00" height="5.80" fill="#00e000" />
<rect x="1037.70" y="152.00" width="14.30" height="5.80" fill="#00e000" />
<rect x="1036.20" y="169.30" width="15.80" height="5.80" fill="#ff4040" />
<rect x="1036.20" y="186.80" width="15.80" height="5.80" fill="#ff4040" />
<rect x="1049.10" y="204.30" width="2.90" height="5.80" fill="#ff4040" />
<rect x="1033.30" y="221.60" width="18.70" height="5.80" fill="#ff4040" />
<rect x="1049.10" y="239.10" width="2.90" height="5.80" fill="#ff4040" />
<rect x="1029.00" y="258.10" width="23.00" height="5.80" fill="#00e000" />
<rect x="1031.10" y="275.50" width="20.90" height="5.80" fill="#ff4040" />
<path d="M999 390h6l-3 3z" stroke="#c0c0c0" stroke-width="0" fill="#c0c0c0" />
<rect x="940.00" y="456.60" width="140.00" height="21.00" fill="#ffffff" />
<rect x="931" y="454.5" width="25" height="23" rx="4.5" fill="#f4511e" transform="rotate(-10 943.5 466)"/>
<circle cx="985.2" cy="465.4" r="1.3" fill="none" stroke="#1a73e0" stroke-width="1.1"/>
<rect x="1006" y="461" width="5.6" height="9" rx="2.8" fill="#1a73e0"/>
<path d="M1004 467.2a4.8 4.8 0 0 0 9.6 0M1008.8 472v1.8" stroke="#1a73e0" stroke-width="1.3" fill="none" />
<rect x="1022.8" y="461.8" width="12.4" height="11.4" rx="1.6" fill="#1a73e0"/>
<rect x="1025.60" y="464.60" width="1.20" height="1.20" fill="#ffffff" />
<rect x="1025.60" y="466.80" width="1.20" height="1.20" fill="#ffffff" />
<rect x="1028.40" y="464.60" width="1.20" height="1.20" fill="#ffffff" />
<rect x="1028.40" y="466.80" width="1.20" height="1.20" fill="#ffffff" />
<rect x="1031.20" y="464.60" width="1.20" height="1.20" fill="#ffffff" />
<rect x="1031.20" y="466.80" width="1.20" height="1.20" fill="#ffffff" />
<rect x="1025.60" y="469.40" width="6.80" height="1.30" fill="#ffffff" />
<defs><linearGradient id="sh" x1="0" x2="0" y1="0" y2="1"><stop offset="0" stop-color="#ff5a10"/><stop offset="1" stop-color="#ff6a3c"/></linearGradient></defs>
<path d="M1041.6 464.6l4.2-2.6q3 2.2 6 0l4.2 2.6-2 3.2-1.6-1v7.4h-7.2v-7.4l-1.6 1z" stroke="#ff5a10" stroke-width="0" fill="url(#sh)" />
<path d="M875.5 511H882.6L888.9 523.7H921.5L927.4 511H1078.5" stroke="#96140c" stroke-width="1.2" fill="none" />
<path d="M924.4 517.5L927.7 523.7H960.4L963.3 517.9" stroke="#96140c" stroke-width="1.2" fill="none" />
<path d="M961.4 511L966.6 523.7H998.3L1001.2 517.9" stroke="#96140c" stroke-width="1.2" fill="none" />
<path d="M999.3 511L1004.5 523.7H1037.2L1043 511" stroke="#96140c" stroke-width="1.2" fill="none" />
<line x1="866.00" y1="153.50" x2="875.00" y2="153.50" stroke="#a0a0a0" stroke-width="1" />
<line x1="860.00" y1="200.50" x2="875.00" y2="200.50" stroke="#d0d0d0" stroke-width="1" />
<line x1="867.00" y1="225.50" x2="875.00" y2="225.50" stroke="#909090" stroke-width="1" />
<rect x="0.00" y="526.00" width="1080.00" height="24.00" fill="#26282c" />
<rect x="0.00" y="550.00" width="1080.00" height="24.00" fill="#1b1c1f" />
<line x1="75.00" y1="549.30" x2="125.30" y2="549.30" stroke="#f08a24" stroke-width="1" />
<path d="M131 538h9M135.5 533.5v9" stroke="#d0d0d0" stroke-width="1.3" fill="none" />
<path d="M1006.5 541.5v-3a5.5 5.5 0 0 1 11 0v3" stroke="#f08a24" stroke-width="1.4" fill="none" />
<rect x="1005" y="538.5" width="3" height="5.5" rx="1.4" fill="none" stroke="#f08a24" stroke-width="1.2"/>
<rect x="1016" y="538.5" width="3" height="5.5" rx="1.4" fill="none" stroke="#f08a24" stroke-width="1.2"/>
<rect x="857.30" y="554.40" width="42.70" height="15.60" fill="#d82a38" />
<rect x="903.8" y="554.9" width="41.5" height="14.6" fill="#33353a" stroke="#55575c" stroke-width="1"/>
<line x1="953.00" y1="557.50" x2="957.00" y2="566.00" stroke="#a01818" stroke-width="1" />
<rect x="966.00" y="555.50" width="15.00" height="12.00" fill="#10e010" />
<line x1="967.50" y1="556.00" x2="967.50" y2="559.00" stroke="#0a8a0a" stroke-width="1" />
<line x1="969.50" y1="556.00" x2="969.50" y2="559.00" stroke="#0a8a0a" stroke-width="1" />
<line x1="971.50" y1="556.00" x2="971.50" y2="559.00" stroke="#0a8a0a" stroke-width="1" />
<line x1="973.50" y1="556.00" x2="973.50" y2="559.00" stroke="#0a8a0a" stroke-width="1" />
<line x1="975.50" y1="556.00" x2="975.50" y2="559.00" stroke="#0a8a0a" stroke-width="1" />
<line x1="977.50" y1="556.00" x2="977.50" y2="559.00" stroke="#0a8a0a" stroke-width="1" />
<line x1="979.50" y1="556.00" x2="979.50" y2="559.00" stroke="#0a8a0a" stroke-width="1" />
<rect x="966.5" y="556" width="14" height="11" fill="none" stroke="#c8c8c8" stroke-width="1"/>
<rect x="986.00" y="565.00" width="2.00" height="2.00" fill="#10d010" />
<rect x="989.00" y="562.50" width="2.00" height="4.50" fill="#10d010" />
<rect x="992.00" y="559.00" width="2.00" height="8.00" fill="#10d010" />
<rect x="995.50" y="555.50" width="2.00" height="11.50" fill="#10d010" />
<defs><linearGradient id="dg" x1="0" x2="1" y1="0" y2="0"><stop offset="0" stop-color="#101418"/><stop offset="0.25" stop-color="#1c2a30"/><stop offset="0.6" stop-color="#22343a"/><stop offset="1" stop-color="#141c20"/></linearGradient></defs>
<rect x="0.00" y="574.20" width="1080.00" height="5.80" fill="url(#dg)" />
<rect x="40.70" y="574.40" width="242.60" height="5.60" fill="#f2f2f2" />
<rect x="539.30" y="574.50" width="41.40" height="5.50" fill="#687276" />
<rect x="1078.00" y="574.50" width="1.00" height="5.50" fill="#c0c0c0" />
</svg>
<span class="t" style="top:2.00px;font:normal 11px/15px 'Liberation Sans','Noto Sans CJK SC',sans-serif;color:#c4c6c9;left:12.00px;letter-spacing:-0.094px;">wh6</span>
<span class="t" style="top:2.00px;font:normal 11px/15px 'Liberation Sans','Noto Sans CJK SC',sans-serif;color:#c4c6c9;left:40.00px;">-</span>
<span class="t" style="top:2.00px;font:normal 11px/15px 'Liberation Sans','Noto Sans CJK SC',sans-serif;color:#c4c6c9;left:50.00px;transform:scaleX(0.9395);transform-origin:0 50%;">Ver6.8.861</span>
<span class="t" style="top:2.00px;font:normal 10.5px/15px 'Liberation Sans','Noto Sans CJK SC',sans-serif;color:#c4c6c9;left:120.70px;letter-spacing:-0.293px;">文华云节点-电信6</span>
<span class="t" style="top:2.00px;font:normal 10.5px/15px 'Liberation Sans','Noto Sans CJK SC',sans-serif;color:#c4c6c9;left:216.20px;letter-spacing:-0.316px;">东证期货-上海电信2</span>
<span class="t" style="top:2.00px;font:normal 10.5px/15px 'Liberation Sans','Noto Sans CJK SC',sans-serif;color:#c4c6c9;left:342.00px;transform:scaleX(0.9426);transform-origin:0 50%;">系统K线图</span>
<span class="t" style="top:24.20px;font:normal 13.5px/19px 'Liberation Sans','Noto Sans CJK SC',sans-serif;color:#c9cbce;left:43.30px;width:400px;text-align:center;letter-spacing:-0.900px;">5s</span>
<span class="t" style="top:24.20px;font:normal 13.5px/19px 'Liberation Sans','Noto Sans CJK SC',sans-serif;color:#c9cbce;left:68.50px;width:400px;text-align:center;">1</span>
<span class="t" style="top:24.20px;font:normal 13.5px/19px 'Liberation Sans','Noto Sans CJK SC',sans-serif;color:#c9cbce;left:94.95px;width:400px;text-align:center;">5</span>
<span class="t" style="top:24.20px;font:normal 13.5px/19px 'Liberation Sans','Noto Sans CJK SC',sans-serif;color:#c9cbce;left:117.90px;width:400px;text-align:center;letter-spacing:-2.400px;">10</span>
<span class="t" style="top:24.20px;font:normal 13.5px/19px 'Liberation Sans','Noto Sans CJK SC',sans-serif;color:#c9cbce;left:143.50px;width:400px;text-align:center;letter-spacing:-2.500px;">15</span>
<span class="t" style="top:24.20px;font:normal 13.5px/19px 'Liberation Sans','Noto Sans CJK SC',sans-serif;color:#c9cbce;left:169.65px;width:400px;text-align:center;letter-spacing:-0.400px;">30</span>
<span class="t" style="top:24.20px;font:normal 13.5px/19px 'Liberation Sans','Noto Sans CJK SC',sans-serif;color:#c9cbce;left:195.20px;width:400px;text-align:center;letter-spacing:-2.500px;">1h</span>
<span class="t" style="top:24.20px;font:normal 13.5px/19px 'Liberation Sans','Noto Sans CJK SC',sans-serif;color:#c9cbce;left:221.40px;width:400px;text-align:center;letter-spacing:0.400px;">2h</span>
<span class="t" style="top:24.20px;font:normal 13.5px/19px 'Liberation Sans','Noto Sans CJK SC',sans-serif;color:#c9cbce;left:246.45px;width:400px;text-align:center;">4h</span>
<span class="t" style="top:26.80px;font:normal 11px/15px 'Liberation Sans','Noto Sans CJK SC',sans-serif;color:#c9cbce;left:270.95px;width:400px;text-align:center;">日</span>
<span class="t" style="top:26.80px;font:normal 11px/15px 'Liberation Sans','Noto Sans CJK SC',sans-serif;color:#c9cbce;left:296.20px;width:400px;text-align:center;">周</span>
<span class="t" style="top:26.80px;font:normal 11px/15px 'Liberation Sans','Noto Sans CJK SC',sans-serif;color:#c9cbce;left:321.60px;width:400px;text-align:center;">月</span>
<span class="t" style="top:26.80px;font:normal 11px/15px 'Liberation Sans','Noto Sans CJK SC',sans-serif;color:#c9cbce;left:347.85px;width:400px;text-align:center;">季</span>
<span class="t" style="top:26.80px;font:normal 11px/15px 'Liberation Sans','Noto Sans CJK SC',sans-serif;color:#c9cbce;left:373.00px;width:400px;text-align:center;">年</span>
<span class="t" style="top:26.80px;font:normal 11px/15px 'Liberation Sans','Noto Sans CJK SC',sans-serif;color:#c9cbce;left:397.60px;width:400px;text-align:center;">自</span>
<span class="t" style="top:26.70px;font:normal 10.3px/14px 'Liberation Sans','Noto Sans CJK SC',sans-serif;color:#c4c6c9;left:860.70px;transform:scaleX(0.9712);transform-origin:0 50%;">板块</span>
<span class="t" style="top:26.70px;font:normal 10.3px/14px 'Liberation Sans','Noto Sans CJK SC',sans-serif;color:#c4c6c9;left:890.70px;transform:scaleX(0.9712);transform-origin:0 50%;">账户</span>
<span class="t" style="top:26.70px;font:normal 10.3px/14px 'Liberation Sans','Noto Sans CJK SC',sans-serif;color:#c4c6c9;left:921.20px;letter-spacing:-0.094px;">资讯</span>
<span class="t" style="top:26.70px;font:normal 10.3px/14px 'Liberation Sans','Noto Sans CJK SC',sans-serif;color:#c4c6c9;left:951.70px;letter-spacing:-0.295px;">个性化</span>
<span class="t" style="top:26.70px;font:normal 10.3px/14px 'Liberation Sans','Noto Sans CJK SC',sans-serif;color:#c4c6c9;left:992.50px;transform:scaleX(0.9712);transform-origin:0 50%;">系统工具</span>
<span class="t" style="top:26.70px;font:normal 10.3px/14px 'Liberation Sans','Noto Sans CJK SC',sans-serif;color:#c4c6c9;left:1043.20px;transform:scaleX(0.9712);transform-origin:0 50%;">帮助</span>
<span class="t" style="top:48.00px;font:normal 9.8px/14px 'Liberation Serif','Noto Serif CJK SC',serif;color:#c8c8c8;left:46.30px;letter-spacing:-0.197px;">沪银2606</span>
<span class="t" style="top:48.00px;font:bold 6.5px/9px 'Liberation Mono','Noto Sans CJK SC',monospace;color:#ff3030;left:85.00px;">M</span>
<span class="t" style="top:48.00px;font:normal 9.8px/14px 'Liberation Serif','Noto Serif CJK SC',serif;color:#c8c8c8;left:93.80px;letter-spacing:0.118px;">(SHFE ag2606)</span>
<span class="t" style="top:48.00px;font:normal 9.8px/14px 'Liberation Serif','Noto Serif CJK SC',serif;color:#c8c8c8;left:170.00px;transform:scaleX(0.9595);transform-origin:0 50%;">周线</span>
<span class="t" style="top:77.80px;font:normal 11px/15px 'Liberation Sans','Noto Sans CJK SC',sans-serif;color:#8a8a8a;left:-186.50px;width:400px;text-align:center;">分</span>
<span class="t" style="top:91.50px;font:normal 11px/15px 'Liberation Sans','Noto Sans CJK SC',sans-serif;color:#8a8a8a;left:-186.50px;width:400px;text-align:center;">时</span>
<span class="t" style="top:105.20px;font:normal 11px/15px 'Liberation Sans','Noto Sans CJK SC',sans-serif;color:#8a8a8a;left:-186.50px;width:400px;text-align:center;">图</span>
<span class="t" style="top:148.30px;font:normal 11px/15px 'Liberation Sans','Noto Sans CJK SC',sans-serif;color:#f0f0f0;left:-186.50px;width:400px;text-align:center;">K</span>
<span class="t" style="top:162.00px;font:normal 11px/15px 'Liberation Sans','Noto Sans CJK SC',sans-serif;color:#f0f0f0;left:-186.50px;width:400px;text-align:center;">线</span>
<span class="t" style="top:175.70px;font:normal 11px/15px 'Liberation Sans','Noto Sans CJK SC',sans-serif;color:#f0f0f0;left:-186.50px;width:400px;text-align:center;">图</span>
<span class="t" style="top:215.80px;font:normal 11px/15px 'Liberation Sans','Noto Sans CJK SC',sans-serif;color:#8a8a8a;left:-186.50px;width:400px;text-align:center;">资</span>
<span class="t" style="top:229.50px;font:normal 11px/15px 'Liberation Sans','Noto Sans CJK SC',sans-serif;color:#8a8a8a;left:-186.50px;width:400px;text-align:center;">讯</span>
<span class="t" style="top:243.20px;font:normal 11px/15px 'Liberation Sans','Noto Sans CJK SC',sans-serif;color:#8a8a8a;left:-186.50px;width:400px;text-align:center;">链</span>
<span class="t" style="top:285.00px;font:normal 10px/14px 'Liberation Sans','Noto Sans CJK SC',sans-serif;color:#8a8a8a;left:-186.10px;width:400px;text-align:center;letter-spacing:0.800px;transform:rotate(90deg);">F10</span>
<span class="t" style="top:300.50px;font:normal 11px/15px 'Liberation Sans','Noto Sans CJK SC',sans-serif;color:#8a8a8a;left:-186.50px;width:400px;text-align:center;">资</span>
<span class="t" style="top:314.30px;font:normal 11px/15px 'Liberation Sans','Noto Sans CJK SC',sans-serif;color:#8a8a8a;left:-186.50px;width:400px;text-align:center;">料</span>
<span class="t" style="top:344.65px;font:normal 11px/15px 'Liberation Sans','Noto Sans CJK SC',sans-serif;color:#8a8a8a;left:-186.50px;width:400px;text-align:center;">页</span>
<span class="t" style="top:358.35px;font:normal 11px/15px 'Liberation Sans','Noto Sans CJK SC',sans-serif;color:#8a8a8a;left:-186.50px;width:400px;text-align:center;">面</span>
<span class="t" style="top:372.05px;font:normal 11px/15px 'Liberation Sans','Noto Sans CJK SC',sans-serif;color:#8a8a8a;left:-186.50px;width:400px;text-align:center;">下</span>
<span class="t" style="top:385.75px;font:normal 11px/15px 'Liberation Sans','Noto Sans CJK SC',sans-serif;color:#8a8a8a;left:-186.50px;width:400px;text-align:center;">单</span>
<span class="t" style="top:183.50px;font:bold 10px/14px 'Liberation Sans','Noto Sans CJK SC',sans-serif;color:#c8c8c8;left:37.90px;">20000</span>
<span class="t" style="top:273.50px;font:bold 10px/14px 'Liberation Sans','Noto Sans CJK SC',sans-serif;color:#c8c8c8;left:37.90px;">10000</span>
<span class="t" style="top:77.00px;font:normal 10px/14px 'Liberation Sans','Noto Sans CJK SC',sans-serif;color:#ff4040;left:727.50px;letter-spacing:-0.053px;">31244</span>
<span class="t" style="top:279.70px;font:normal 10px/14px 'Liberation Sans','Noto Sans CJK SC',sans-serif;color:#ff4040;left:186.20px;letter-spacing:-0.150px;">8545</span>
<span class="t" style="top:303.30px;font:normal 10px/14px 'Liberation Sans','Noto Sans CJK SC',sans-serif;color:#00e8e8;left:210.80px;letter-spacing:-0.283px;">7535</span>
<span class="t" style="top:300.80px;font:normal 10.5px/15px 'Liberation Sans','Noto Sans CJK SC',sans-serif;color:#e8e800;left:68.30px;transform:scaleX(0.8299);transform-origin:0 50%;">61</span>
<span class="t" style="top:301.30px;font:normal 10px/14px 'Liberation Serif','Noto Serif CJK SC',serif;color:#e8e800;left:79.00px;">周</span>
<span class="t" style="top:61.50px;font:normal 10.5px/15px 'Liberation Sans','Noto Sans CJK SC',sans-serif;color:#e8e800;left:71.90px;-webkit-text-stroke:0.3px currentColor;transform:scaleX(0.8508);transform-origin:0 50%;">MA</span>
<span class="t" style="top:62.00px;font:normal 10px/14px 'Liberation Serif','Noto Serif CJK SC',serif;color:#e8e800;left:86.10px;letter-spacing:-0.100px;-webkit-text-stroke:0.3px currentColor;">组合</span>
<span class="t" style="top:61.50px;font:normal 10.5px/15px 'Liberation Sans','Noto Sans CJK SC',sans-serif;color:#e8e800;left:107.30px;letter-spacing:-0.203px;-webkit-text-stroke:0.3px currentColor;">(5,10,20,50,0,0)</span>
<span class="t" style="top:61.50px;font:normal 10.5px/15px 'Liberation Sans','Noto Sans CJK SC',sans-serif;color:#f0f0f0;left:195.80px;-webkit-text-stroke:0.3px currentColor;transform:scaleX(0.9383);transform-origin:0 50%;">MA5 20744.20</span>
<span class="t" style="top:61.50px;font:normal 10.5px/15px 'Liberation Sans','Noto Sans CJK SC',sans-serif;color:#e8e800;left:267.50px;letter-spacing:-0.321px;-webkit-text-stroke:0.3px currentColor;">MA10 21501.40</span>
<span class="t" style="top:61.50px;font:normal 10.5px/15px 'Liberation Sans','Noto Sans CJK SC',sans-serif;color:#ff00ff;left:345.00px;letter-spacing:-0.321px;-webkit-text-stroke:0.3px currentColor;">MA20 17705.85</span>
<span class="t" style="top:61.50px;font:normal 10.5px/15px 'Liberation Sans','Noto Sans CJK SC',sans-serif;color:#00e000;left:423.00px;-webkit-text-stroke:0.3px currentColor;transform:scaleX(0.9399);transform-origin:0 50%;">MA50 12661.48</span>
<span class="t" style="top:323.00px;font:bold 10px/14px 'Liberation Sans','Noto Sans CJK SC',sans-serif;color:#c8c8c8;left:38.70px;letter-spacing:-0.194px;">520</span>
<span class="t" style="top:322.70px;font:bold 9.8px/14px 'Liberation Serif','Noto Serif CJK SC',serif;color:#c8c8c8;left:55.30px;">万</span>
<span class="t" style="top:349.70px;font:bold 10px/14px 'Liberation Sans','Noto Sans CJK SC',sans-serif;color:#c8c8c8;left:38.70px;letter-spacing:-0.194px;">260</span>
<span class="t" style="top:349.40px;font:bold 9.8px/14px 'Liberation Serif','Noto Serif CJK SC',serif;color:#c8c8c8;left:55.30px;">万</span>
<span class="t" style="top:315.20px;font:normal 10.5px/15px 'Liberation Sans','Noto Sans CJK SC',sans-serif;color:#e8e800;left:71.70px;-webkit-text-stroke:0.3px currentColor;transform:scaleX(0.8027);transform-origin:0 50%;">CJL</span>
<span class="t" style="top:315.70px;font:normal 10px/14px 'Liberation Serif','Noto Serif CJK SC',serif;color:#d0d0d0;left:104.50px;letter-spacing:-0.150px;-webkit-text-stroke:0.3px currentColor;">成交量</span>
<span class="t" style="top:315.20px;font:normal 10.5px/15px 'Liberation Sans','Noto Sans CJK SC',sans-serif;color:#f0f0f0;left:138.20px;letter-spacing:-0.332px;-webkit-text-stroke:0.3px currentColor;">1910022.00</span>
<span class="t" style="top:315.70px;font:normal 10px/14px 'Liberation Serif','Noto Serif CJK SC',serif;color:#d0d0d0;left:198.70px;letter-spacing:-0.350px;-webkit-text-stroke:0.3px currentColor;">持仓量</span>
<span class="t" style="top:315.20px;font:normal 10.5px/15px 'Liberation Sans','Noto Sans CJK SC',sans-serif;color:#f0f0f0;left:232.00px;letter-spacing:-0.305px;-webkit-text-stroke:0.3px currentColor;">229657.00</span>
<span class="t" style="top:408.50px;font:bold 10px/14px 'Liberation Sans','Noto Sans CJK SC',sans-serif;color:#c8c8c8;left:43.40px;letter-spacing:0.017px;">3000</span>
<span class="t" style="top:436.50px;font:bold 10px/14px 'Liberation Sans','Noto Sans CJK SC',sans-serif;color:#c8c8c8;left:43.40px;letter-spacing:0.017px;">2000</span>
<span class="t" style="top:464.50px;font:bold 10px/14px 'Liberation Sans','Noto Sans CJK SC',sans-serif;color:#c8c8c8;left:43.40px;letter-spacing:0.017px;">1000</span>
<span class="t" style="top:492.50px;font:bold 10px/14px 'Liberation Sans','Noto Sans CJK SC',sans-serif;color:#c8c8c8;left:60.20px;">0</span>
<span class="t" style="top:381.60px;font:normal 10.5px/15px 'Liberation Sans','Noto Sans CJK SC',sans-serif;color:#e8e800;left:71.40px;-webkit-text-stroke:0.3px currentColor;transform:scaleX(0.9362);transform-origin:0 50%;">MACD(12,26,9)</span>
<span class="t" style="top:381.60px;font:normal 10.5px/15px 'Liberation Sans','Noto Sans CJK SC',sans-serif;color:#f0f0f0;left:157.60px;-webkit-text-stroke:0.3px currentColor;transform:scaleX(0.9345);transform-origin:0 50%;">DIFF 2673.90</span>
<span class="t" style="top:381.60px;font:normal 10.5px/15px 'Liberation Sans','Noto Sans CJK SC',sans-serif;color:#e8e800;left:224.40px;letter-spacing:-0.309px;-webkit-text-stroke:0.3px currentColor;">DEA 2805.68</span>
<span class="t" style="top:381.60px;font:normal 10.5px/15px 'Liberation Sans','Noto Sans CJK SC',sans-serif;color:#f0f0f0;left:293.50px;letter-spacing:-0.237px;-webkit-text-stroke:0.3px currentColor;">-263.55</span>
<span class="t" style="top:512.60px;font:bold 10px/14px 'Liberation Sans','Noto Sans CJK SC',sans-serif;color:#b8b8b8;left:184.50px;letter-spacing:0.307px;">2025/04</span>
<span class="t" style="top:512.60px;font:bold 10px/14px 'Liberation Sans','Noto Sans CJK SC',sans-serif;color:#b8b8b8;left:345.50px;letter-spacing:0.307px;">2025/07</span>
<span class="t" style="top:512.60px;font:bold 10px/14px 'Liberation Sans','Noto Sans CJK SC',sans-serif;color:#b8b8b8;left:518.60px;letter-spacing:0.307px;">2025/10</span>
<span class="t" style="top:512.60px;font:bold 10px/14px 'Liberation Sans','Noto Sans CJK SC',sans-serif;color:#b8b8b8;left:679.60px;letter-spacing:0.307px;">2026/01</span>
<span class="t" style="top:49.30px;font:bold 11px/15px 'Liberation Sans','Noto Sans CJK SC',sans-serif;color:#f03c3c;left:878.30px;">M</span>
<span class="t" style="top:47.50px;font:normal 19px/27px 'Liberation Sans','Noto Sans CJK SC',sans-serif;color:#e8e800;left:890.20px;transform:scaleX(0.9554);transform-origin:0 50%;">沪银2606</span>
<span class="t" style="top:47.50px;font:normal 19px/27px 'Liberation Sans','Noto Sans CJK SC',sans-serif;color:#e8e800;left:978.70px;letter-spacing:-0.121px;">ag2606</span>
<span class="t" style="top:75.00px;font:normal 12px/17px 'Liberation Sans','Noto Sans CJK SC',sans-serif;color:#e0e0e0;left:877.30px;">卖五</span>
<span class="t" style="top:74.50px;font:normal 12.5px/18px 'Liberation Sans','Noto Sans CJK SC',sans-serif;color:#00e000;left:917.90px;letter-spacing:0.209px;">18924</span>
<span class="t" style="top:74.50px;font:normal 12.5px/18px 'Liberation Sans','Noto Sans CJK SC',sans-serif;color:#e8e800;right:72.00px;">1</span>
<span class="t" style="top:79.20px;font:normal 9px/13px 'Liberation Sans','Noto Sans CJK SC',sans-serif;color:#00c000;left:1052.50px;">-1</span>
<span class="t" style="top:92.50px;font:normal 12px/17px 'Liberation Sans','Noto Sans CJK SC',sans-serif;color:#e0e0e0;left:877.30px;">卖四</span>
<span class="t" style="top:92.00px;font:normal 12.5px/18px 'Liberation Sans','Noto Sans CJK SC',sans-serif;color:#00e000;left:917.90px;letter-spacing:0.209px;">18922</span>
<span class="t" style="top:92.00px;font:normal 12.5px/18px 'Liberation Sans','Noto Sans CJK SC',sans-serif;color:#e8e800;right:72.00px;">1</span>
<span class="t" style="top:110.20px;font:normal 12px/17px 'Liberation Sans','Noto Sans CJK SC',sans-serif;color:#e0e0e0;left:877.30px;">卖三</span>
<span class="t" style="top:109.70px;font:normal 12.5px/18px 'Liberation Sans','Noto Sans CJK SC',sans-serif;color:#00e000;left:917.90px;letter-spacing:0.209px;">18921</span>
<span class="t" style="top:109.70px;font:normal 12.5px/18px 'Liberation Sans','Noto Sans CJK SC',sans-serif;color:#e8e800;right:72.00px;">15</span>
<span class="t" style="top:114.40px;font:normal 9px/13px 'Liberation Sans','Noto Sans CJK SC',sans-serif;color:#00c000;left:1052.50px;">+13</span>
<span class="t" style="top:127.70px;font:normal 12px/17px 'Liberation Sans','Noto Sans CJK SC',sans-serif;color:#e0e0e0;left:877.30px;">卖二</span>
<span class="t" style="top:127.20px;font:normal 12.5px/18px 'Liberation Sans','Noto Sans CJK SC',sans-serif;color:#00e000;left:917.90px;letter-spacing:0.209px;">18920</span>
<span class="t" style="top:127.20px;font:normal 12.5px/18px 'Liberation Sans','Noto Sans CJK SC',sans-serif;color:#e8e800;right:72.00px;">16</span>
<span class="t" style="top:131.90px;font:normal 9px/13px 'Liberation Sans','Noto Sans CJK SC',sans-serif;color:#00c000;left:1052.50px;">+4</span>
<span class="t" style="top:145.20px;font:normal 12px/17px 'Liberation Sans','Noto Sans CJK SC',sans-serif;color:#e0e0e0;left:877.30px;">卖一</span>
<span class="t" style="top:144.70px;font:normal 12.5px/18px 'Liberation Sans','Noto Sans CJK SC',sans-serif;color:#00e000;left:917.90px;letter-spacing:0.209px;">18919</span>
<span class="t" style="top:144.70px;font:normal 12.5px/18px 'Liberation Sans','Noto Sans CJK SC',sans-serif;color:#e8e800;right:72.00px;">10</span>
<span class="t" style="top:162.50px;font:normal 12px/17px 'Liberation Sans','Noto Sans CJK SC',sans-serif;color:#e0e0e0;left:877.30px;">买一</span>
<span class="t" style="top:162.00px;font:normal 12.5px/18px 'Liberation Sans','Noto Sans CJK SC',sans-serif;color:#00e000;left:917.90px;letter-spacing:0.439px;">18911</span>
<span class="t" style="top:162.00px;font:normal 12.5px/18px 'Liberation Sans','Noto Sans CJK SC',sans-serif;color:#e8e800;right:72.00px;">11</span>
<span class="t" style="top:166.70px;font:normal 9px/13px 'Liberation Sans','Noto Sans CJK SC',sans-serif;color:#e03030;left:1052.50px;">-4</span>
<span class="t" style="top:180.00px;font:normal 12px/17px 'Liberation Sans','Noto Sans CJK SC',sans-serif;color:#e0e0e0;left:877.30px;">买二</span>
<span class="t" style="top:179.50px;font:normal 12.5px/18px 'Liberation Sans','Noto Sans CJK SC',sans-serif;color:#00e000;left:917.90px;letter-spacing:0.209px;">18910</span>
<span class="t" style="top:179.50px;font:normal 12.5px/18px 'Liberation Sans','Noto Sans CJK SC',sans-serif;color:#e8e800;right:72.00px;">11</span>
<span class="t" style="top:197.50px;font:normal 12px/17px 'Liberation Sans','Noto Sans CJK SC',sans-serif;color:#e0e0e0;left:877.30px;">买三</span>
<span class="t" style="top:197.00px;font:normal 12.5px/18px 'Liberation Sans','Noto Sans CJK SC',sans-serif;color:#00e000;left:917.90px;letter-spacing:0.209px;">18909</span>
<span class="t" style="top:197.00px;font:normal 12.5px/18px 'Liberation Sans','Noto Sans CJK SC',sans-serif;color:#e8e800;right:72.00px;">2</span>
<span class="t" style="top:214.80px;font:normal 12px/17px 'Liberation Sans','Noto Sans CJK SC',sans-serif;color:#e0e0e0;left:877.30px;">买四</span>
<span class="t" style="top:214.30px;font:normal 12.5px/18px 'Liberation Sans','Noto Sans CJK SC',sans-serif;color:#00e000;left:917.90px;letter-spacing:0.209px;">18908</span>
<span class="t" style="top:214.30px;font:normal 12.5px/18px 'Liberation Sans','Noto Sans CJK SC',sans-serif;color:#e8e800;right:72.00px;">13</span>
<span class="t" style="top:219.00px;font:normal 9px/13px 'Liberation Sans','Noto Sans CJK SC',sans-serif;color:#e03030;left:1052.50px;">+7</span>
<span class="t" style="top:232.30px;font:normal 12px/17px 'Liberation Sans','Noto Sans CJK SC',sans-serif;color:#e0e0e0;left:877.30px;">买五</span>
<span class="t" style="top:231.80px;font:normal 12.5px/18px 'Liberation Sans','Noto Sans CJK SC',sans-serif;color:#00e000;left:917.90px;letter-spacing:0.209px;">18906</span>
<span class="t" style="top:231.80px;font:normal 12.5px/18px 'Liberation Sans','Noto Sans CJK SC',sans-serif;color:#e8e800;right:72.00px;">2</span>
<span class="t" style="top:251.30px;font:normal 12px/17px 'Liberation Sans','Noto Sans CJK SC',sans-serif;color:#e0e0e0;left:877.30px;">总卖</span>
<span class="t" style="top:250.80px;font:normal 12.5px/18px 'Liberation Sans','Noto Sans CJK SC',sans-serif;color:#00e000;left:917.90px;letter-spacing:0.209px;">18921</span>
<span class="t" style="top:250.80px;font:normal 12.5px/18px 'Liberation Sans','Noto Sans CJK SC',sans-serif;color:#e8e800;right:72.00px;">43</span>
<span class="t" style="top:268.70px;font:normal 12px/17px 'Liberation Sans','Noto Sans CJK SC',sans-serif;color:#e0e0e0;left:877.30px;">总买</span>
<span class="t" style="top:268.20px;font:normal 12.5px/18px 'Liberation Sans','Noto Sans CJK SC',sans-serif;color:#00e000;left:917.90px;letter-spacing:0.209px;">18909</span>
<span class="t" style="top:268.20px;font:normal 12.5px/18px 'Liberation Sans','Noto Sans CJK SC',sans-serif;color:#e8e800;right:72.00px;">39</span>
<span class="t" style="top:288.30px;font:normal 12px/17px 'Liberation Sans','Noto Sans CJK SC',sans-serif;color:#e0e0e0;left:877.30px;">最新</span>
<span class="t" style="top:288.00px;font:bold 11px/15px 'Liberation Sans','Noto Sans CJK SC',sans-serif;color:#00e000;right:118.50px;">18919</span>
<span class="t" style="top:288.30px;font:normal 12px/17px 'Liberation Sans','Noto Sans CJK SC',sans-serif;color:#e0e0e0;left:973.30px;">涨跌</span>
<span class="t" style="top:288.00px;font:bold 11px/15px 'Liberation Sans','Noto Sans CJK SC',sans-serif;color:#00e000;right:7.50px;">-1141/5.69%</span>
<span class="t" style="top:306.94px;font:normal 12px/17px 'Liberation Sans','Noto Sans CJK SC',sans-serif;color:#e0e0e0;left:877.30px;">现手</span>
<span class="t" style="top:306.64px;font:bold 11px/15px 'Liberation Sans','Noto Sans CJK SC',sans-serif;color:#e8e800;right:118.50px;">56</span>
<span class="t" style="top:306.94px;font:normal 12px/17px 'Liberation Sans','Noto Sans CJK SC',sans-serif;color:#e0e0e0;left:973.30px;">速涨</span>
<span class="t" style="top:306.64px;font:bold 11px/15px 'Liberation Sans','Noto Sans CJK SC',sans-serif;color:#00e000;right:7.50px;">-0.57%</span>
<span class="t" style="top:325.58px;font:normal 12px/17px 'Liberation Sans','Noto Sans CJK SC',sans-serif;color:#e0e0e0;left:877.30px;">总量</span>
<span class="t" style="top:325.28px;font:bold 11px/15px 'Liberation Sans','Noto Sans CJK SC',sans-serif;color:#e8e800;right:118.50px;">83146</span>
<span class="t" style="top:325.58px;font:normal 12px/17px 'Liberation Sans','Noto Sans CJK SC',sans-serif;color:#e0e0e0;left:973.30px;">开盘</span>
<span class="t" style="top:325.28px;font:bold 11px/15px 'Liberation Sans','Noto Sans CJK SC',sans-serif;color:#00e000;right:7.50px;">19392</span>
<span class="t" style="top:344.22px;font:normal 12px/17px 'Liberation Sans','Noto Sans CJK SC',sans-serif;color:#e0e0e0;left:877.30px;">持仓</span>
<span class="t" style="top:343.92px;font:bold 11px/15px 'Liberation Sans','Noto Sans CJK SC',sans-serif;color:#e8e800;right:118.50px;">229685</span>
<span class="t" style="top:344.22px;font:normal 12px/17px 'Liberation Sans','Noto Sans CJK SC',sans-serif;color:#e0e0e0;left:973.30px;">最高</span>
<span class="t" style="top:343.92px;font:bold 11px/15px 'Liberation Sans','Noto Sans CJK SC',sans-serif;color:#00e000;right:7.50px;">19450</span>
<span class="t" style="top:362.86px;font:normal 12px/17px 'Liberation Sans','Noto Sans CJK SC',sans-serif;color:#e0e0e0;left:877.30px;">日增</span>
<span class="t" style="top:362.56px;font:bold 11px/15px 'Liberation Sans','Noto Sans CJK SC',sans-serif;color:#e8e800;right:118.50px;">4377</span>
<span class="t" style="top:362.86px;font:normal 12px/17px 'Liberation Sans','Noto Sans CJK SC',sans-serif;color:#e0e0e0;left:973.30px;">最低</span>
<span class="t" style="top:362.56px;font:bold 11px/15px 'Liberation Sans','Noto Sans CJK SC',sans-serif;color:#00e000;right:7.50px;">18850</span>
<span class="t" style="top:381.50px;font:normal 12px/17px 'Liberation Sans','Noto Sans CJK SC',sans-serif;color:#e0e0e0;left:877.30px;">外盘</span>
<span class="t" style="top:381.20px;font:bold 11px/15px 'Liberation Sans','Noto Sans CJK SC',sans-serif;color:#e8e800;right:118.50px;">39431</span>
<span class="t" style="top:381.50px;font:normal 12px/17px 'Liberation Sans','Noto Sans CJK SC',sans-serif;color:#e0e0e0;left:973.30px;">均价</span>
<span class="t" style="top:381.20px;font:bold 11px/15px 'Liberation Sans','Noto Sans CJK SC',sans-serif;color:#00e000;right:7.50px;">19068</span>
<span class="t" style="top:400.14px;font:normal 12px/17px 'Liberation Sans','Noto Sans CJK SC',sans-serif;color:#e0e0e0;left:877.30px;">比例</span>
<span class="t" style="top:399.84px;font:bold 11px/15px 'Liberation Sans','Noto Sans CJK SC',sans-serif;color:#e8e800;right:118.50px;">47.4%</span>
<span class="t" style="top:400.14px;font:normal 12px/17px 'Liberation Sans','Noto Sans CJK SC',sans-serif;color:#e0e0e0;left:973.30px;">昨收</span>
<span class="t" style="top:399.84px;font:bold 11px/15px 'Liberation Sans','Noto Sans CJK SC',sans-serif;color:#e8e8e8;right:7.50px;">19980</span>
<span class="t" style="top:418.78px;font:normal 12px/17px 'Liberation Sans','Noto Sans CJK SC',sans-serif;color:#e0e0e0;left:877.30px;">内盘</span>
<span class="t" style="top:418.48px;font:bold 11px/15px 'Liberation Sans','Noto Sans CJK SC',sans-serif;color:#e8e800;right:118.50px;">43715</span>
<span class="t" style="top:418.78px;font:normal 12px/17px 'Liberation Sans','Noto Sans CJK SC',sans-serif;color:#e0e0e0;left:973.30px;">昨结</span>
<span class="t" style="top:418.48px;font:bold 11px/15px 'Liberation Sans','Noto Sans CJK SC',sans-serif;color:#e8e8e8;right:7.50px;">20060</span>
<span class="t" style="top:437.42px;font:normal 12px/17px 'Liberation Sans','Noto Sans CJK SC',sans-serif;color:#e0e0e0;left:877.30px;">比例</span>
<span class="t" style="top:437.12px;font:bold 11px/15px 'Liberation Sans','Noto Sans CJK SC',sans-serif;color:#e8e800;right:118.50px;">52.6%</span>
<span class="t" style="top:437.42px;font:normal 12px/17px 'Liberation Sans','Noto Sans CJK SC',sans-serif;color:#e0e0e0;left:973.30px;">涨停</span>
<span class="t" style="top:437.12px;font:bold 11px/15px 'Liberation Sans','Noto Sans CJK SC',sans-serif;color:#ff4040;right:7.50px;">24072</span>
<span class="t" style="top:456.06px;font:normal 12px/17px 'Liberation Sans','Noto Sans CJK SC',sans-serif;color:#e0e0e0;left:877.30px;">杠杆</span>
<span class="t" style="top:476.00px;font:normal 12.5px/18px 'Liberation Sans','Noto Sans CJK SC',sans-serif;color:#8c8c8c;left:879.50px;">时间</span>
<span class="t" style="top:476.00px;font:normal 12.5px/18px 'Liberation Sans','Noto Sans CJK SC',sans-serif;color:#8c8c8c;left:952.50px;">价位</span>
<span class="t" style="top:476.00px;font:normal 12.5px/18px 'Liberation Sans','Noto Sans CJK SC',sans-serif;color:#8c8c8c;left:987.50px;">现手</span>
<span class="t" style="top:476.00px;font:normal 12.5px/18px 'Liberation Sans','Noto Sans CJK SC',sans-serif;color:#8c8c8c;left:1018.00px;">增仓</span>
<span class="t" style="top:476.00px;font:normal 12.5px/18px 'Liberation Sans','Noto Sans CJK SC',sans-serif;color:#8c8c8c;left:1049.00px;">开平</span>
<span class="t" style="top:451.80px;font:bold 20px/28px 'Liberation Sans','Noto Sans CJK SC',sans-serif;color:#ffffff;left:743.30px;width:400px;text-align:center;transform:scaleX(1.3) skewX(-8deg);">S</span>
<span class="t" style="top:457.60px;font:bold 13px/18px 'Liberation Sans','Noto Sans CJK SC',sans-serif;color:#1a73e0;left:768.20px;width:400px;text-align:center;">中</span>
<span class="t" style="top:454.30px;font:bold 15px/21px 'Liberation Sans','Noto Sans CJK SC',sans-serif;color:#1a73e0;left:791.80px;width:400px;text-align:center;">,</span>
<span class="t" style="top:456.50px;font:bold 15px/21px 'Liberation Sans','Noto Sans CJK SC',sans-serif;color:#1a73e0;left:1062.80px;">Ai</span>
<span class="t" style="top:510.50px;font:normal 10px/14px 'Liberation Serif','Noto Serif CJK SC',serif;color:#7a7a7a;left:705.00px;width:400px;text-align:center;">明细</span>
<span class="t" style="top:510.50px;font:normal 10px/14px 'Liberation Serif','Noto Serif CJK SC',serif;color:#7a7a7a;left:744.00px;width:400px;text-align:center;">分价</span>
<span class="t" style="top:510.50px;font:normal 10px/14px 'Liberation Serif','Noto Serif CJK SC',serif;color:#7a7a7a;left:783.00px;width:400px;text-align:center;">分笔</span>
<span class="t" style="top:510.50px;font:normal 10px/14px 'Liberation Serif','Noto Serif CJK SC',serif;color:#7a7a7a;left:821.00px;width:400px;text-align:center;">统计</span>
<span class="t" style="top:531.00px;font:normal 10.3px/14px 'Liberation Sans','Noto Sans CJK SC',sans-serif;color:#c8c8c8;left:29.00px;letter-spacing:-0.229px;">小编导读</span>
<span class="t" style="top:531.00px;font:normal 10.3px/14px 'Liberation Sans','Noto Sans CJK SC',sans-serif;color:#f08a24;left:80.30px;letter-spacing:-0.229px;">我的合约</span>
<span class="t" style="top:532.00px;font:normal 11px/15px 'Liberation Sans','Noto Sans CJK SC',sans-serif;color:#f08a24;left:1026.70px;transform:scaleX(0.9591);transform-origin:0 50%;">在线客服</span>
<span class="t" style="top:554.20px;font:bold 9.8px/14px 'Liberation Sans','Noto Sans CJK SC',sans-serif;color:#ff3b3b;left:29.60px;letter-spacing:-0.096px;">上证指数</span>
<span class="t" style="top:554.20px;font:bold 10px/14px 'Liberation Mono','Noto Sans CJK SC',monospace;color:#ff3b3b;left:75.20px;transform:scaleX(0.8997);transform-origin:0 50%;">4062.98</span>
<span class="t" style="top:554.20px;font:bold 10px/14px 'Liberation Mono','Noto Sans CJK SC',monospace;color:#ff3b3b;left:119.60px;transform:scaleX(0.9163);transform-origin:0 50%;">+13.08</span>
<span class="t" style="top:554.20px;font:bold 9.8px/14px 'Liberation Sans','Noto Sans CJK SC',sans-serif;color:#ff3b3b;left:175.20px;letter-spacing:-0.129px;">文华商品</span>
<span class="t" style="top:554.20px;font:bold 10px/14px 'Liberation Mono','Noto Sans CJK SC',monospace;color:#ff3b3b;left:221.00px;transform:scaleX(0.9079);transform-origin:0 50%;">189.18</span>
<span class="t" style="top:554.20px;font:bold 10px/14px 'Liberation Mono','Noto Sans CJK SC',monospace;color:#ff3b3b;left:260.40px;transform:scaleX(0.8862);transform-origin:0 50%;">+1.01</span>
<span class="t" style="top:555.30px;font:normal 10.3px/14px 'Liberation Sans','Noto Sans CJK SC',sans-serif;color:#ffffff;left:678.70px;width:400px;text-align:center;">期货户</span>
<span class="t" style="top:555.30px;font:normal 10.3px/14px 'Liberation Sans','Noto Sans CJK SC',sans-serif;color:#e0e0e0;left:724.50px;width:400px;text-align:center;">外盘户</span>
<span class="t" style="top:554.70px;font:normal 10.5px/15px 'Liberation Sans','Noto Sans CJK SC',sans-serif;color:#d0d0d0;left:1003.30px;letter-spacing:-0.020px;">21:15:40 - wh</span>
<span class="t" style="top:574.50px;font:normal 11px/15px 'Liberation Sans','Noto Sans CJK SC',sans-serif;color:#d8d8d8;left:990.00px;">21:15</span>
</body></html>
